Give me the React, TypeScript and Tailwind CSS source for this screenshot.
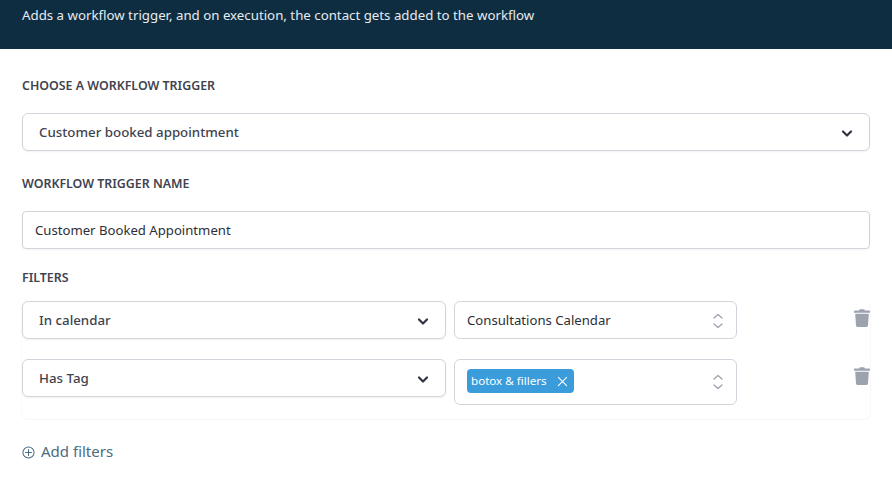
import React from "react";

function Chevron() {
  return (
    <svg viewBox="0 0 20 20" className="w-[20px] h-[20px] shrink-0" fill="none" stroke="#2f3340" strokeWidth="2.2" strokeLinecap="round" strokeLinejoin="round">
      <path d="M6 8.500l4 4 4-4" />
    </svg>
  );
}

function UpDown() {
  return (
    <svg viewBox="0 0 12 20" className="w-[12px] h-[20px] shrink-0" fill="none" stroke="#9ca3af" strokeWidth="1.3" strokeLinecap="round" strokeLinejoin="round">
      <path d="M2 7L6 3.500 10 7M2 13L6 16.500 10 13" />
    </svg>
  );
}

function Trash() {
  return (
    <svg viewBox="0 0 16 18" className="w-[16px] h-[18px] block" fill="#9ca3af">
      <path d="M5.800 0.300h4.400l.7 1.300H15a1 1 0 0 1 1 1v1.100H0V2.600a1 1 0 0 1 1-1h4.100z" />
      <path d="M1.200 4.800h13.600l-.8 11.800a1.400 1.400 0 0 1-1.400 1.300H3.400a1.400 1.400 0 0 1-1.400-1.300z" />
    </svg>
  );
}

function Label({ children }: { children: React.ReactNode }) {
  return <div className="text-[12.400px] leading-[16px] font-semibold uppercase text-[#3f4350]">{children}</div>;
}

function SelectBox({ text }: { text: string }) {
  return (
    <div className="h-[38px] flex items-center justify-between pl-[16px] pr-[12px] pt-[1px] bg-white border border-[#d1d5db] rounded-[6px] shadow-[0_1px_2px_rgba(0,0,0,0.05)] text-[13.300px] font-medium text-[#3f4350]">
      <span>{text}</span>
      <Chevron />
    </div>
  );
}

export default function App() {
  return (
    <div className="w-[892px] h-[486px] bg-white overflow-hidden font-['Noto_Sans',sans-serif]">
      <div className="h-[49px] bg-[#0f2d41] px-[22px] pt-[5px] text-[13.270px] leading-[20px] text-[#e6ebef]">
        Adds a workflow trigger, and on execution, the contact gets added to the workflow
      </div>
      <div className="px-[22px] pt-[29px]">
        <Label>Choose a workflow trigger</Label>
        <div className="mt-[19px]">
          <SelectBox text="Customer booked appointment" />
        </div>
        <div className="mt-[25px]">
          <Label>Workflow trigger name</Label>
        </div>
        <div className="mt-[19px] h-[38px] flex items-center px-[12px] pt-[1px] bg-white border border-[#d1d5db] rounded-[4px] shadow-[0_1px_2px_rgba(0,0,0,0.05)] text-[13.150px] text-[#2b2f38]">
          Customer Booked Appointment
        </div>
        <div className="mt-[21px]">
          <Label>Filters</Label>
        </div>
        <div className="mt-[15px] pb-[14px] rounded-[6px] border-b border-[#f6f6f6] shadow-[1px_0_0_#f8f8f8,-1px_0_0_#fbfbfb]">
          <div className="flex items-start">
            <div className="w-[424px] shrink-0"><SelectBox text="In calendar" /></div>
            <div className="ml-[8px] w-[283px] shrink-0 h-[38px] flex items-center justify-between pl-[12px] pr-[12px] pt-[1px] border border-[#d1d5db] rounded-[6px] text-[13.150px] text-[#2b2f38]">
              <span>Consultations Calendar</span>
              <UpDown />
            </div>
            <div className="ml-[117px] mt-[8px] shrink-0"><Trash /></div>
          </div>
          <div className="flex items-start mt-[20px]">
            <div className="w-[424px] shrink-0"><SelectBox text="Has Tag" /></div>
            <div className="ml-[8px] w-[283px] shrink-0 h-[46px] flex items-center justify-between pl-[12px] pr-[12px] border border-[#d1d5db] rounded-[6px]">
              <span className="h-[24px] w-[107px] -mt-[2px] flex items-center justify-between pl-[4px] pr-[6px] rounded-[4px] bg-[#3b9cdc] text-white text-[11.600px]">
                botox &amp; fillers
                <svg viewBox="0 0 12 12" className="w-[11px] h-[11px]" fill="none" stroke="white" strokeWidth="1.200" strokeLinecap="round">
                  <path d="M1.500 1.500l9 9M10.500 1.500l-9 9" />
                </svg>
              </span>
              <UpDown />
            </div>
            <div className="ml-[117px] mt-[8px] shrink-0"><Trash /></div>
          </div>
        </div>
        <div className="mt-[19px] flex items-center gap-[6px] text-[15px] leading-[24px] text-[#4b6b80]">
          <svg viewBox="0 0 14 14" className="w-[13px] h-[13px] mt-[2px]" fill="none" stroke="#4b6b80" strokeWidth="1.100" strokeLinecap="round">
            <circle cx="7" cy="7" r="6" />
            <path d="M7 3.800v6.400M3.800 7h6.400" />
          </svg>
          Add filters
        </div>
      </div>
    </div>
  );
}
